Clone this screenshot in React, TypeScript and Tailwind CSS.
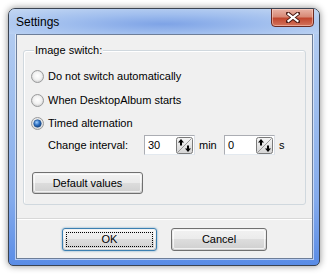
import React from "react";

const font = "font-['Liberation_Sans',Arial,sans-serif]";

const Radio = ({ checked }: { checked?: boolean }) => (
  <svg width="13" height="13" viewBox="0 0 13 13" className="shrink-0">
    <defs>
      <radialGradient id="rg-face" cx="50%" cy="45%" r="55%">
        <stop offset="0%" stopColor="#ffffff" />
        <stop offset="60%" stopColor="#f1f1f1" />
        <stop offset="100%" stopColor="#cfcfcf" />
      </radialGradient>
      <radialGradient id="rg-dot" cx="40%" cy="35%" r="70%">
        <stop offset="0%" stopColor="#9fd0ff" />
        <stop offset="55%" stopColor="#2a6cc0" />
        <stop offset="100%" stopColor="#133f78" />
      </radialGradient>
    </defs>
    <circle cx="6.5" cy="6.5" r="6" fill="url(#rg-face)" stroke="#9a9b9c" strokeWidth="1" />
    {checked && (
      <circle cx="6.5" cy="6.5" r="3.8" fill="url(#rg-dot)" stroke="#1c4d86" strokeWidth="0.6" />
    )}
  </svg>
);

const Spinner = () => (
  <svg width="17" height="17" viewBox="0 0 17 17" className="shrink-0">
    <defs>
      <linearGradient id="sp-bg" x1="0" y1="0" x2="0" y2="1">
        <stop offset="0%" stopColor="#f6f6f6" />
        <stop offset="100%" stopColor="#d4d4d4" />
      </linearGradient>
    </defs>
    <rect x="0.5" y="0.5" width="16" height="16" rx="2" fill="url(#sp-bg)" stroke="#7a7a7a" />
    <line x1="2" y1="15" x2="15" y2="2" stroke="#9a9a9a" strokeWidth="1" />
    <path d="M5 8.5V5" stroke="#000" strokeWidth="2" />
    <path d="M2 5.5L5 2L8 5.5Z" fill="#000" />
    <path d="M12 8.5V12" stroke="#000" strokeWidth="2" />
    <path d="M9 11.5L12 15L15 11.5Z" fill="#000" />
  </svg>
);

const NumberBox = ({ value }: { value: string }) => (
  <div className="flex items-center w-[51px] h-[20px] bg-white border border-[#abadb3] border-b-[#e3e9ef] border-r-[#dbdfe6] pl-[3px] pr-[1px]">
    <span className="flex-1 leading-[13px]">{value}</span>
    <Spinner />
  </div>
);

const VistaButton = ({
  children,
  focused,
  className,
}: {
  children: React.ReactNode;
  focused?: boolean;
  className?: string;
}) => (
  <button
    type="button"
    className={`relative flex items-center justify-center rounded-[3px] border ${
      focused
        ? "border-[#3c7fb1] shadow-[0_0_2px_rgba(60,127,177,0.8)]"
        : "border-[#707070]"
    } bg-[linear-gradient(to_bottom,#f2f2f2_0%,#ebebeb_48%,#dddddd_50%,#cfcfcf_100%)] text-[11px] text-black ${className ?? ""}`}
  >
    <span className="absolute inset-[1px] rounded-[2px] border border-white/70" />
    {focused && (
      <span className="absolute inset-[3px] border border-dotted border-black" />
    )}
    <span className="relative">{children}</span>
  </button>
);

export default function App() {
  return (
    <div className={`w-[329px] h-[276px] bg-white pt-[8px] pl-[8px] ${font}`}>
      <div className="relative flex flex-col w-[312px] h-[258px] rounded-t-[7px] rounded-b-[5px] border border-[#3b4452] shadow-[0_0_7px_rgba(0,0,0,0.45)] bg-[linear-gradient(to_bottom,#b9d0f1_0%,#9dbdee_40%,#83aaec_75%,#5a8ce6_100%)] overflow-hidden">
        {/* title bar */}
        <div className="relative flex items-center h-[25px] pl-[7px] bg-[radial-gradient(ellipse_at_50%_60%,#7ea3e6_0%,#a0beee_45%,#c4d8f3_100%)]">
          <span className="text-[12px] leading-[14px] text-black">Settings</span>
          <div className="absolute right-[5px] top-[-1px] w-[43px] h-[19px] rounded-b-[4px] border border-[#6b2a22] bg-[linear-gradient(to_bottom,#e9b3a6_0%,#d88a77_45%,#c1472f_55%,#d3735c_100%)] flex items-center justify-center shadow-[inset_0_0_0_1px_rgba(255,220,210,0.5)]">
            <svg width="14" height="11" viewBox="0 0 14 11">
              <path d="M2 1.5L12 9.5M12 1.5L2 9.5" stroke="#4a1a14" strokeWidth="4" strokeLinecap="square" />
              <path d="M2.5 2L11.5 9M11.5 2L2.5 9" stroke="#ffffff" strokeWidth="2.2" strokeLinecap="square" />
            </svg>
          </div>
        </div>

        {/* client area */}
        <div className="flex flex-col ml-[7px] mr-[6px] h-[225px] bg-[#f0f0f0] border border-[#6d7e99] shadow-[0_0_0_1px_rgba(255,255,255,0.55)] text-[11px] text-black">
          <div className="relative ml-[6px] mt-[15px] w-[283px] h-[155px] rounded-[3px] border border-[#d0d8de] shadow-[inset_1px_1px_0_#ffffff] pt-[13px]">
            <span className="absolute left-[10px] top-[-7px] px-[1px] bg-[#f0f0f0] leading-[13px]">
              Image switch:
            </span>
            <div className="flex items-center gap-[4px] h-[24px] pl-[7px]">
              <Radio />
              <span>Do not switch automatically</span>
            </div>
            <div className="flex items-center gap-[4px] h-[24px] pl-[7px]">
              <Radio />
              <span>When DesktopAlbum starts</span>
            </div>
            <div className="flex items-center gap-[4px] h-[23px] pl-[7px]">
              <Radio checked />
              <span>Timed alternation</span>
            </div>
            <div className="flex items-center h-[20px] pl-[24px]">
              <span className="w-[96px]">Change interval:</span>
              <NumberBox value="30" />
              <span className="ml-[4px] w-[25px]">min</span>
              <NumberBox value="0" />
              <span className="ml-[4px]">s</span>
            </div>
            <div className="pl-[8px] mt-[17px]">
              <VistaButton className="w-[111px] h-[22px]">Default values</VistaButton>
            </div>
          </div>

          <div className="mt-[13px] h-[2px] border-t border-[#d8d8d8] border-b border-b-white" />

          <div className="flex justify-center gap-[14px] mt-[8px]">
            <VistaButton focused className="w-[95px] h-[23px]">
              OK
            </VistaButton>
            <VistaButton className="w-[96px] h-[23px]">Cancel</VistaButton>
          </div>
        </div>
      </div>
    </div>
  );
}
